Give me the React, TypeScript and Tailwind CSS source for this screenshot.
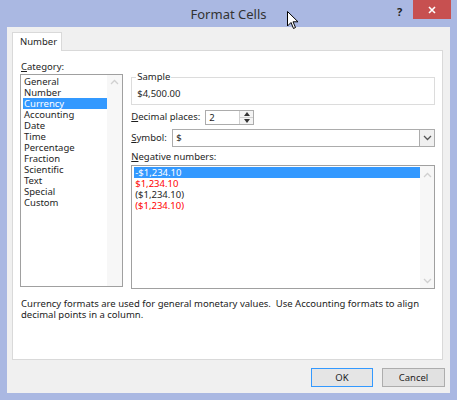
import React from "react";

const font = { fontFamily: '"Noto Sans", "Open Sans", sans-serif' };

function ChevUp({ color = "#b8b8b8" }: { color?: string }) {
  return (
    <svg width="9" height="6" viewBox="0 0 9 6">
      <path d="M1 5 L4.5 1.5 L8 5" fill="none" stroke={color} strokeWidth="1.3" />
    </svg>
  );
}
function ChevDown({ color = "#b8b8b8" }: { color?: string }) {
  return (
    <svg width="9" height="6" viewBox="0 0 9 6">
      <path d="M1 1 L4.5 4.5 L8 1" fill="none" stroke={color} strokeWidth="1.3" />
    </svg>
  );
}

export default function App() {
  const categories = [
    "General",
    "Number",
    "Currency",
    "Accounting",
    "Date",
    "Time",
    "Percentage",
    "Fraction",
    "Scientific",
    "Text",
    "Special",
    "Custom",
  ];
  return (
    <div
      className="w-[457px] h-[400px] bg-[#aab8e2] flex flex-col text-[#1e1e1e] relative overflow-hidden"
      style={font}
    >
      {/* Title bar */}
      <div className="h-[27px] shrink-0 relative flex items-center justify-center">
        <span className="text-[13px] text-[#333] leading-none mt-[1px]">Format Cells</span>
        <span className="absolute left-[397px] top-[4px] text-[11px] font-bold text-[#222]">?</span>
        <div className="absolute left-[413px] top-0 w-[38px] h-[19px] bg-[#c75050] flex items-center justify-center">
          <svg width="8" height="8" viewBox="0 0 8 8">
            <path d="M1 1 L7 7 M7 1 L1 7" stroke="#fff" strokeWidth="1.6" />
          </svg>
        </div>
        {/* mouse cursor */}
        <svg className="absolute left-[287px] top-[11px]" width="12" height="19" viewBox="0 0 12 19">
          <path d="M0.5 0.5 L0.5 15 L4 11.5 L6.5 17.5 L8.5 16.5 L6 10.8 L11 10.8 Z" fill="#fff" stroke="#000" strokeWidth="1" />
        </svg>
      </div>

      {/* Client area */}
      <div className="mx-[7px] mb-[7px] flex-1 bg-[#f0f0f0] flex flex-col px-[5px] pt-[5px]">
        {/* Tab */}
        <div className="flex h-[18px]">
          <div className="w-[50px] h-[19px] bg-white border border-b-0 border-[#d9d9d9] text-[9.5px] flex items-center pl-[7px] relative z-10">
            Number
          </div>
        </div>
        {/* Panel */}
        <div className="h-[310px] w-[431px] bg-white border border-[#d9d9d9] flex flex-col px-[7px] pt-[9px]">
          <div className="flex gap-[8px]">
            {/* Left column */}
            <div className="w-[104px] flex flex-col">
              <div className="text-[9.5px] leading-[13px] h-[14px] pl-[1px]">
                <span className="underline">C</span>ategory:
              </div>
              <div className="h-[213px] border border-[#a0a0a0] flex">
                <div className="flex-1 pt-[1px] pl-[2px] flex flex-col">
                  {categories.map((c) => (
                    <div
                      key={c}
                      className={
                        "h-[11px] leading-[11px] text-[9.5px] pl-[1px] " +
                        (c === "Currency" ? "bg-[#3399ff] text-white" : "")
                      }
                    >
                      {c}
                    </div>
                  ))}
                </div>
                <div className="w-[15px] bg-[#f7f7f7] flex flex-col items-center pt-[4px]">
                  <ChevUp color="#d0d0d0" />
                </div>
              </div>
            </div>

            {/* Right column */}
            <div className="w-[306px] flex flex-col pt-[17px]">
              {/* Sample */}
              <div className="h-[28px] border border-[#dcdcdc] flex flex-col pl-[5px] relative">
                <span className="absolute -top-[7px] left-[4px] bg-white px-[1px] text-[9.5px] leading-[12px]">Sample</span>
                <span className="text-[9.5px] leading-[11px] mt-[10px]">$4,500.00</span>
              </div>
              {/* Decimal places */}
              <div className="flex items-center mt-[5px] h-[15px]">
                <span className="text-[9.5px] w-[74px]">
                  <span className="underline">D</span>ecimal places:
                </span>
                <div className="w-[49px] h-[15px] border border-[#acacac] flex">
                  <span className="flex-1 text-[9.5px] leading-[13px] pl-[3px]">2</span>
                  <div className="w-[14px] border-l border-[#d0d0d0] flex flex-col">
                    <div className="flex-1 flex items-center justify-center border-b border-[#d0d0d0] bg-[#f4f4f4]">
                      <svg width="6" height="4" viewBox="0 0 6 4"><path d="M0 4 L3 0 L6 4 Z" fill="#333" /></svg>
                    </div>
                    <div className="flex-1 flex items-center justify-center bg-[#f4f4f4]">
                      <svg width="6" height="4" viewBox="0 0 6 4"><path d="M0 0 L3 4 L6 0 Z" fill="#333" /></svg>
                    </div>
                  </div>
                </div>
              </div>
              {/* Symbol */}
              <div className="flex items-center mt-[4px] h-[18px]">
                <span className="text-[9.5px] w-[41px]">
                  <span className="underline">S</span>ymbol:
                </span>
                <div className="flex-1 h-[18px] border border-[#acacac] flex">
                  <span className="flex-1 text-[9.5px] leading-[16px] pl-[3px]">$</span>
                  <div className="w-[15px] border-l border-[#acacac] flex items-center justify-center bg-[#f0f0f0]">
                    <ChevDown color="#555" />
                  </div>
                </div>
              </div>
              {/* Negative numbers */}
              <div className="text-[9.5px] leading-[12px] mt-[4px] h-[12px]">
                <span className="underline">N</span>egative numbers:
              </div>
              <div className="h-[124px] mt-[2px] border border-[#a0a0a0] flex">
                <div className="flex-1 pt-[1px] pl-[2px] flex flex-col">
                  <div className="h-[11px] leading-[11px] text-[9.5px] bg-[#3399ff] text-white pl-[1px]">-$1,234.10</div>
                  <div className="h-[11px] leading-[11px] text-[9.5px] text-[#ff0000] pl-[1px]">$1,234.10</div>
                  <div className="h-[11px] leading-[11px] text-[9.5px] pl-[1px]">($1,234.10)</div>
                  <div className="h-[11px] leading-[11px] text-[9.5px] text-[#ff0000] pl-[1px]">($1,234.10)</div>
                </div>
                <div className="w-[14px] bg-[#f7f7f7] flex flex-col items-center justify-between pt-[6px] pb-[4px]">
                  <ChevUp color="#d0d0d0" />
                  <ChevDown color="#d0d0d0" />
                </div>
              </div>
            </div>
          </div>
          <div className="mt-[9px] text-[9.5px] leading-[11px] text-[#222] pl-[1px] whitespace-nowrap">
            Currency formats are used for general monetary values.&nbsp; Use Accounting formats to align
            <br />
            decimal points in a column.
          </div>
        </div>
        {/* Buttons */}
        <div className="flex justify-end gap-[9px] mt-[8px]">
          <button className="w-[62px] h-[19px] bg-[#e5e5e5] border border-[#3399ff] text-[9.5px] leading-none">OK</button>
          <button className="w-[63px] h-[19px] bg-[#e1e1e1] border border-[#adadad] text-[9.5px] leading-none">Cancel</button>
        </div>
      </div>
    </div>
  );
}
